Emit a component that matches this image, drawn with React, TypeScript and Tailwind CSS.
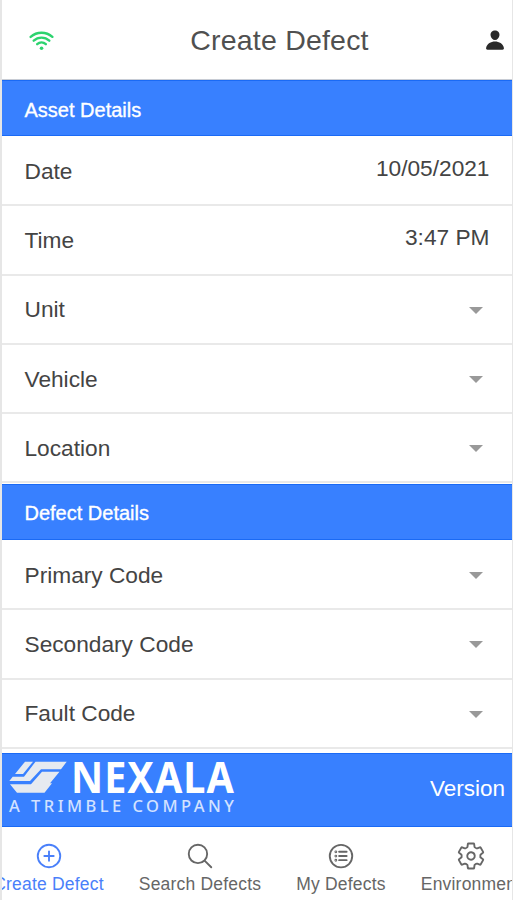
import type { IconType } from "react-icons";
import {
  IoAddCircleOutline,
  IoListCircleOutline,
  IoPerson,
  IoSearchOutline,
  IoSettingsOutline,
  IoWifi,
} from "react-icons/io5";

type Field = { label: string; value?: string };

const assetFields: Field[] = [
  { label: "Date", value: "10/05/2021" },
  { label: "Time", value: "3:47 PM" },
  { label: "Unit" },
  { label: "Vehicle" },
  { label: "Location" },
];

const defectFields: Field[] = [
  { label: "Primary Code" },
  { label: "Secondary Code" },
  { label: "Fault Code" },
];

const tabs: { label: string; icon: IconType; className: string }[] = [
  { label: "Create Defect", icon: IoAddCircleOutline, className: "w-[118px] -ml-[12.5px] text-[#4a80fa]" },
  { label: "Search Defects", icon: IoSearchOutline, className: "w-[185px] text-[#666]" },
  { label: "My Defects", icon: IoListCircleOutline, className: "w-[97px] text-[#666]" },
  { label: "Environment", icon: IoSettingsOutline, className: "w-[163px] text-[#666]" },
];

function FieldRow({ label, value }: Field) {
  return (
    <div className="flex h-[69.3px] items-center justify-between border-b-2 border-[#e9e9e9] pl-[22.5px] pr-[22.5px] pt-[2px] text-[22.7px] text-[#444]">
      <span className="mb-[2px]">{label}</span>
      {value ? (
        <span className="mb-[7px]">{value}</span>
      ) : (
        <svg viewBox="0 0 14 7" className="mr-[7px] h-[7px] w-[14px] fill-[#999]">
          <path d="M0 0h14L7 7z" />
        </svg>
      )}
    </div>
  );
}

function Section({ title, fields }: { title: string; fields: Field[] }) {
  return (
    <section className="mb-[0.5px]">
      <h2 className="flex h-14 items-center border-y border-[#1a6af5] bg-[#3880ff] pl-[22.5px] pt-[3px] text-[20px] text-white [-webkit-text-stroke:0.35px_white]">
        {title}
      </h2>
      <div className="pt-px">
        {fields.map((field) => (
          <FieldRow key={field.label} {...field} />
        ))}
      </div>
    </section>
  );
}

function Logo() {
  return (
    <svg viewBox="0 0 230 60" className="h-[60px] w-[230px]">
      <g fill="#e6eaf0">
        <path d="M17 1.7h8L15 14H7z" />
        <path d="M27.5 1.7H58.7L53 9.3H33L22 21H1.3L4.7 16.7H16z" />
        <path d="M34 11.7H51.5L42 23.3H44L36.5 32.7H9L2 24.3H23z" />
      </g>
      {/* wordmark is slightly condensed with open spacing */}
      <g transform="translate(63 32.5) scale(0.92 1)">
        <text textLength="177" fontFamily="Noto Sans, sans-serif" fontWeight="700" fontSize="43" fill="#fff">
          NEXALA
        </text>
      </g>
      <text x="1" y="51.5" textLength="225" fontFamily="Noto Sans, sans-serif" fontWeight="500" fontSize="16.5" fill="#d3e2ff">
        A TRIMBLE COMPANY
      </text>
    </svg>
  );
}

export default function App() {
  return (
    <div className="flex h-[900px] w-[513px] flex-col overflow-hidden border-l-2 border-r border-[#e6e6e6] bg-white font-['Liberation_Sans',Arial,sans-serif]">
      <header className="flex h-20 shrink-0 items-center justify-between border-b border-[#c8ccd4] pl-[25px] pr-[6px] pt-px">
        <IoWifi className="size-[29px] text-[#2dd36f]" />
        <h1 className="ml-[19px] text-[28.5px] tracking-[0.2px] text-[#505050]">Create Defect</h1>
        <IoPerson className="size-[22px] text-[#2a2a2a]" />
      </header>

      <main className="h-[673px] shrink-0 overflow-hidden">
        <Section title="Asset Details" fields={assetFields} />
        <Section title="Defect Details" fields={defectFields} />
      </main>

      <div className="flex h-[74px] shrink-0 items-center justify-between border-y border-[#1a6af5] bg-[#3880ff] pl-[6px] pr-[7px]">
        <Logo />
        <span className="-mt-[2px] text-[22.5px] text-white">Version</span>
      </div>

      <nav className="flex grow">
        {tabs.map(({ label, icon: Icon, className }) => (
          <button key={label} className={`flex shrink-0 flex-col items-center pt-[14px] ${className}`}>
            <Icon className="size-[30px]" />
            <span className="mt-px whitespace-nowrap text-[17.5px] leading-6 tracking-[0.2px]">{label}</span>
          </button>
        ))}
      </nav>
    </div>
  );
}
